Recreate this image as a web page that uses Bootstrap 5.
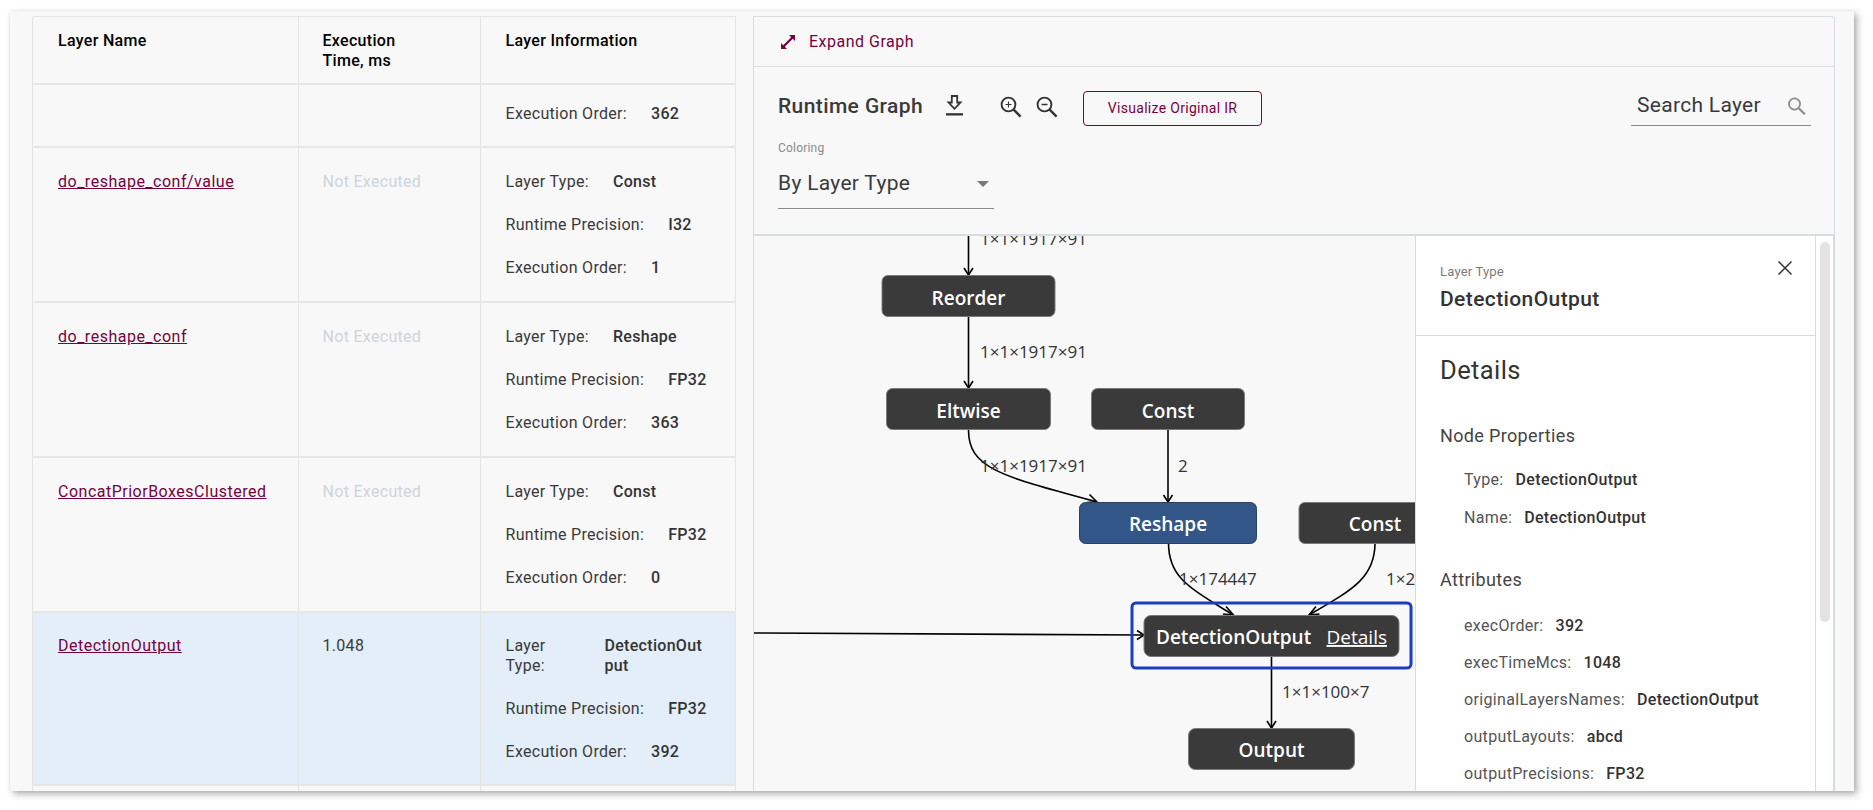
<!DOCTYPE html>
<html lang="en">
<head>
<meta charset="utf-8">
<title>Runtime Graph</title>
<link href="https://cdn.jsdelivr.net/npm/bootstrap@5.3.0/dist/css/bootstrap.min.css" rel="stylesheet">
<style>
html,body{height:810px;overflow:hidden;background:#fff;}
body{padding:11px 19px 19px 10px;font-family:Roboto,"Liberation Sans",sans-serif;color:#3a3a3a;}
.shot{height:780px;background:#f8f8f8;box-shadow:3px 3px 7px rgba(0,0,0,.32),0 0 3px rgba(0,0,0,.06);padding:5px 19px 0 22px;overflow:hidden;}
.tbl-wrap{width:703px;flex:none;height:775px;overflow:hidden;border-top:1px solid #e2e5e6;border-left:1px solid #e2e5e6;border-top-left-radius:3px;}
.lay-table{table-layout:fixed;width:702px;margin:0;border-collapse:collapse;--bs-table-bg:transparent;font-size:16px;line-height:20px;letter-spacing:.3px;}
.lay-table th,.lay-table td{border:0;border-bottom:2px solid #e6e6e6;border-right:1px solid #e2e5e6;padding:24px 24px 23px 25px;vertical-align:top;color:#3a3a3a;}
.lay-table th{padding:14px 24px 12px 25px;color:#000;font-weight:500;}
.lay-table th:nth-child(2),.lay-table td:nth-child(2){padding-left:24px;}
.lay-table td.short{padding-top:19px;padding-bottom:22px;}
.lay-table tr.picked td{background:#e3eef9;padding-top:23px;padding-bottom:22px;}
.lay-table td.filler{height:60px;}
.lay-link{color:#76023f;letter-spacing:.5px;}
.lay-table td.no-exec{color:#ced4da;}
.info{display:flex;gap:24px;margin-bottom:23px;white-space:nowrap;}
.info:last-child{margin-bottom:0;}
.info b{font-weight:500;color:#333;}
.info.narrow{white-space:normal;}
.info.narrow b{flex:0 0 106px;overflow-wrap:anywhere;}
.splitter{width:18px;flex:none;border-left:1px solid #e6e6e6;}
.graph-panel{width:1082px;flex:none;height:775px;border:1px solid #d5dde0;border-bottom:0;border-top-right-radius:4px;overflow:hidden;}
.expand-bar{height:50px;border-bottom:1px solid #d5dde0;padding:0 0 0 26px;color:#76023f;font-size:16px;}
.expand-bar span{margin-left:13px;letter-spacing:.5px;}
.tools{height:169px;border-bottom:2px solid #d5dde0;padding:24px 24px 0 24px;}
.tool-top{height:35px;}
.rt-title{font-size:21px;font-weight:500;width:168px;letter-spacing:.4px;margin-bottom:3px;}
.dl-icon{margin-bottom:7px;}
.zoom-icon{margin-bottom:4px;}
.ir-btn{--bs-btn-padding-x:0;--bs-btn-padding-y:0;width:179px;height:35px;font-size:14px;font-weight:400;color:#76023f;border:1px solid #76023f;border-radius:4px;background:transparent;letter-spacing:.3px;}
.ir-btn:hover{background:transparent;color:#76023f;border-color:#76023f;}
.search-box{width:180px;height:35px;border-bottom:1px solid #8a8a8a;font-size:21px;padding:0 4px 5px 6px;margin-right:-1px;letter-spacing:.3px;}
.color-lbl{font-size:12px;color:#8a8a8a;margin-top:14px;line-height:16px;letter-spacing:.2px;}
.color-sel{width:216px;height:46px;border-bottom:1px solid #8a8a8a;font-size:21px;padding-right:5px;margin-top:7px;padding-bottom:4px;letter-spacing:.3px;}
.caret-shape{width:0;height:0;border-left:6px solid transparent;border-right:6px solid transparent;border-top:6px solid #777;}
.graph-body{height:555px;}
.canvas{width:661px;flex:none;height:555px;overflow:hidden;}
.canvas svg{display:block;}
.nd{fill:#3a3a3a;stroke:#7a7a7a;stroke-width:1;}
.nd-blue{fill:#335689;stroke:#30405a;stroke-width:1;}
.nd-t{font-family:"Open Sans","Noto Sans",sans-serif;font-size:19px;font-weight:600;fill:#fff;text-anchor:middle;}
.eg{fill:none;stroke:#000;stroke-width:1.6;}
.ar{fill:none;stroke:#000;stroke-width:1.6;}
.el{font-family:"Open Sans","Noto Sans",sans-serif;font-size:17px;fill:#333;}
.details{width:401px;flex:none;height:555px;background:#fff;border-left:1px solid #d5dde0;border-right:1px solid #d5dde0;overflow:hidden;position:relative;}
.det-head{height:100px;border-bottom:1px solid #d5dde0;padding:26px 24px 0 24px;}
.det-kind{font-size:13px;line-height:20px;color:#7b7b7b;letter-spacing:.2px;}
.det-name{font-size:21px;line-height:30px;font-weight:500;color:#333;margin-top:2px;letter-spacing:.4px;}
.det-close{position:absolute;top:24px;right:22px;width:16px;height:16px;}
.det-body{padding:16px 24px 0 24px;}
.det-title{font-size:25.5px;line-height:36px;font-weight:400;color:#333;margin:0;letter-spacing:.4px;}
.det-sub{font-size:18px;line-height:24px;color:#444;font-weight:400;margin:0;letter-spacing:.35px;}
.prop{padding-left:24px;font-size:16px;line-height:20px;color:#555;display:flex;gap:12px;letter-spacing:.33px;}
.prop b{font-weight:500;color:#333;}
.track{width:18px;flex:none;height:555px;padding:6px 3px 0 4px;border-right:1px solid #d5dde0;margin-right:3px;background:#fff;}
.thumb{width:10px;height:380px;background:#e3e3e3;border-radius:5px;}
</style>
</head>
<body>
<div class="shot d-flex">
  <div class="tbl-wrap">
    <table class="table lay-table">
      <colgroup><col style="width:265px"><col style="width:182px"><col style="width:255px"></colgroup>
      <thead><tr><th>Layer Name</th><th>Execution<br>Time, ms</th><th>Layer Information</th></tr></thead>
      <tbody>
        <tr><td class="short"></td><td class="short"></td><td class="short"><div class="info"><span>Execution Order:</span><b>362</b></div></td></tr>
        <tr><td><a class="lay-link" href="#">do_reshape_conf/value</a></td><td class="no-exec">Not Executed</td><td><div class="info"><span>Layer Type:</span><b>Const</b></div><div class="info"><span>Runtime Precision:</span><b>I32</b></div><div class="info"><span>Execution Order:</span><b>1</b></div></td></tr>
        <tr><td><a class="lay-link" href="#">do_reshape_conf</a></td><td class="no-exec">Not Executed</td><td><div class="info"><span>Layer Type:</span><b>Reshape</b></div><div class="info"><span>Runtime Precision:</span><b>FP32</b></div><div class="info"><span>Execution Order:</span><b>363</b></div></td></tr>
        <tr><td><a class="lay-link" href="#">ConcatPriorBoxesClustered</a></td><td class="no-exec">Not Executed</td><td><div class="info"><span>Layer Type:</span><b>Const</b></div><div class="info"><span>Runtime Precision:</span><b>FP32</b></div><div class="info"><span>Execution Order:</span><b>0</b></div></td></tr>
        <tr class="picked"><td><a class="lay-link" href="#">DetectionOutput</a></td><td>1.048</td><td><div class="info narrow"><span>Layer Type:</span><b>DetectionOutput</b></div><div class="info"><span>Runtime Precision:</span><b>FP32</b></div><div class="info"><span>Execution Order:</span><b>392</b></div></td></tr>
        <tr><td class="filler"></td><td class="filler"></td><td class="filler"></td></tr>
      </tbody>
    </table>
  </div>
  <div class="splitter"></div>
  <div class="graph-panel">
    <div class="expand-bar d-flex align-items-center">
      <svg width="16" height="16" viewBox="0 0 16 16" aria-hidden="true"><path d="M9 1h6v6l-2.200-2.200-8 8 2.200 2.200H1V9l2.200 2.200 8-8z" fill="#76023f"/></svg>
      <span>Expand Graph</span>
    </div>
    <div class="tools">
      <div class="tool-top d-flex align-items-center">
        <div class="rt-title">Runtime Graph</div>
        <svg class="dl-icon" width="17" height="21" viewBox="0 0 17 21" aria-hidden="true"><path d="M5.800 1h5.400v6.500h3.300L8.500 13.800 2.500 7.500h3.300z" fill="none" stroke="#333" stroke-width="1.800"/><rect y="18.200" width="17" height="2.300" fill="#333"/></svg>
        <svg class="zoom-icon" style="margin-left:37px" width="22" height="22" viewBox="0 0 22 22" aria-hidden="true"><circle cx="8.500" cy="8.500" r="6.900" fill="none" stroke="#333" stroke-width="1.900"/><path d="M13.600 13.600l7 7" stroke="#333" stroke-width="2.400"/><path d="M5.500 8.500h6M8.500 5.500v6" stroke="#333" stroke-width="1.100"/></svg>
        <svg class="zoom-icon" style="margin-left:14px" width="22" height="22" viewBox="0 0 22 22" aria-hidden="true"><circle cx="8.500" cy="8.500" r="6.900" fill="none" stroke="#333" stroke-width="1.900"/><path d="M13.600 13.600l7 7" stroke="#333" stroke-width="2.400"/><path d="M5.500 8.500h6" stroke="#333" stroke-width="1.300"/></svg>
        <button type="button" class="btn ir-btn" style="margin-left:25px">Visualize Original IR</button>
        <div class="search-box d-flex align-items-center justify-content-between ms-auto">
          <span>Search Layer</span>
          <svg width="20" height="18" viewBox="0 0 20 18" aria-hidden="true"><circle cx="7.500" cy="7" r="5.600" fill="none" stroke="#8c8c8c" stroke-width="1.700"/><path d="M11.700 11.200l6.200 6" stroke="#8c8c8c" stroke-width="2.200"/></svg>
        </div>
      </div>
      <div class="color-lbl">Coloring</div>
      <div class="color-sel d-flex align-items-center justify-content-between"><span>By Layer Type</span><i class="caret-shape"></i></div>
    </div>
    <div class="graph-body d-flex">
      <div class="canvas">
        <svg width="661" height="555" viewBox="754 236 661 555" role="img" aria-label="Runtime graph">
          <path class="eg" d="M968.500 236V275"/>
          <path class="ar" d="M964 268l4.500 7 4.500-7"/>
          <path class="eg" d="M968.500 317V388"/>
          <path class="ar" d="M964 381l4.500 7 4.500-7"/>
          <path class="eg" d="M968.500 430C968.500 468 1000 476 1097 502"/>
          <path class="ar" d="M1089.500 494.500L1097 502 1087 502.500"/>
          <path class="eg" d="M1168 430V502"/>
          <path class="ar" d="M1163.500 495l4.500 7 4.500-7"/>
          <path class="eg" d="M1168.500 543C1168.500 578 1190 588 1233 615"/>
          <path class="ar" d="M1226 606.500L1233.500 615 1223 614"/>
          <path class="eg" d="M1375 543C1375 578 1352 590 1309 615"/>
          <path class="ar" d="M1316 606.500L1309 615 1319.500 614"/>
          <path class="eg" d="M1271.500 656V728"/>
          <path class="ar" d="M1267 721l4.500 7 4.500-7"/>
          <path class="eg" d="M754 633L1144 635"/>
          <path class="ar" d="M1137 630.500l7 4.500-7 4.500"/>

          <text class="el" x="980" y="245">1×1×1917×91</text>
          <text class="el" x="980" y="358">1×1×1917×91</text>
          <text class="el" x="980" y="472">1×1×1917×91</text>
          <text class="el" x="1178" y="472">2</text>
          <text class="el" x="1179" y="585">1×174447</text>
          <text class="el" x="1386" y="585">1×2</text>
          <text class="el" x="1282" y="698">1×1×100×7</text>

          <rect class="nd" x="882" y="275.500" width="173" height="41" rx="6"/>
          <text class="nd-t" x="968.500" y="305">Reorder</text>
          <rect class="nd" x="886.500" y="388.500" width="164" height="41" rx="6"/>
          <text class="nd-t" x="968.500" y="418">Eltwise</text>
          <rect class="nd" x="1091.500" y="388.500" width="153" height="41" rx="6"/>
          <text class="nd-t" x="1168" y="418">Const</text>
          <rect class="nd-blue" x="1079.500" y="502.500" width="177" height="41" rx="6"/>
          <text class="nd-t" x="1168" y="531">Reshape</text>
          <rect class="nd" x="1299" y="502.500" width="153" height="41" rx="6"/>
          <text class="nd-t" x="1375" y="531">Const</text>
          <rect x="1132" y="603" width="279" height="65" rx="4" fill="none" stroke="#1a3dc4" stroke-width="3"/>
          <rect class="nd" x="1144" y="615.500" width="255" height="41" rx="7"/>
          <text class="nd-t" x="1156" y="644" style="text-anchor:start">DetectionOutput</text>
          <text class="nd-t" x="1387" y="644" style="text-anchor:end;font-weight:400;text-decoration:underline">Details</text>
          <rect class="nd" x="1188.500" y="728.500" width="166" height="41" rx="7"/>
          <text class="nd-t" x="1271.500" y="757">Output</text>
        </svg>
      </div>
      <aside class="details">
        <div class="det-head">
          <div class="det-kind">Layer Type</div>
          <div class="det-name">DetectionOutput</div>
          <svg class="det-close" viewBox="0 0 16 16" aria-hidden="true"><path d="M1.500 1.500l13 13M14.500 1.500l-13 13" stroke="#333" stroke-width="1.500"/></svg>
        </div>
        <div class="det-body">
          <h5 class="det-title">Details</h5>
          <h6 class="det-sub" style="margin-top:36px">Node Properties</h6>
          <div class="prop" style="margin-top:22px"><span>Type:</span><b>DetectionOutput</b></div>
          <div class="prop" style="margin-top:18px"><span>Name:</span><b>DetectionOutput</b></div>
          <h6 class="det-sub" style="margin-top:40px">Attributes</h6>
          <div class="prop" style="margin-top:24px"><span>execOrder:</span><b>392</b></div>
          <div class="prop" style="margin-top:17px"><span>execTimeMcs:</span><b>1048</b></div>
          <div class="prop" style="margin-top:17px"><span>originalLayersNames:</span><b>DetectionOutput</b></div>
          <div class="prop" style="margin-top:17px"><span>outputLayouts:</span><b>abcd</b></div>
          <div class="prop" style="margin-top:17px"><span>outputPrecisions:</span><b>FP32</b></div>
        </div>
      </aside>
      <div class="track"><div class="thumb"></div></div>
    </div>
  </div>
</div>
<script src="https://cdn.jsdelivr.net/npm/bootstrap@5.3.0/dist/js/bootstrap.bundle.min.js"></script>
</body>
</html>
